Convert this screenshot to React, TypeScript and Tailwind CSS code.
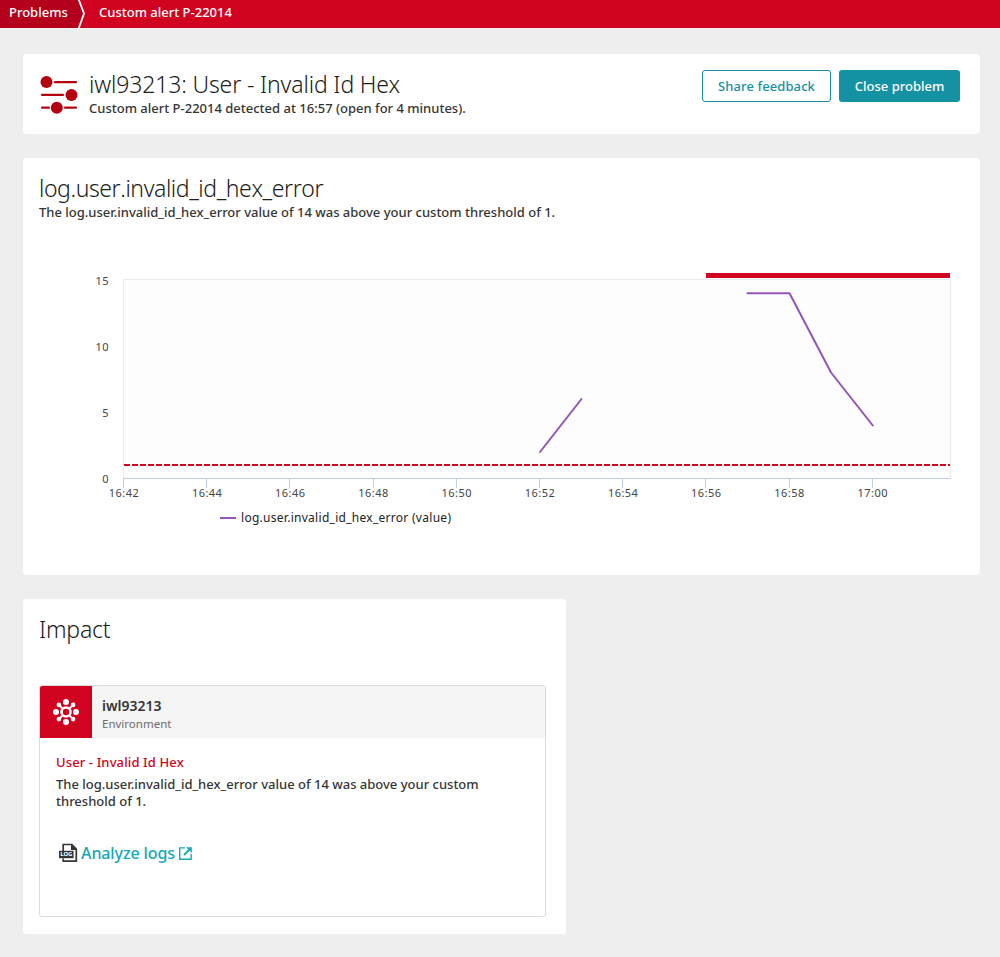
import type { ReactNode } from "react";

const times = ["16:42", "16:44", "16:46", "16:48", "16:50", "16:52", "16:54", "16:56", "16:58", "17:00"];
const levels = [15, 10, 5, 0];

function Card({ className, children }: { className: string; children: ReactNode }) {
  return <section className={`rounded-[3px] bg-white px-4 ${className}`}>{children}</section>;
}

function SlidersIcon() {
  return (
    <svg className="h-[38px] w-[38px] shrink-0" viewBox="0 0 38 38" fill="#b4000f">
      <circle cx="6.5" cy="6" r="6" />
      <rect x="14" y="5" width="23" height="2.2" rx="1" />
      <rect x="1" y="17.8" width="23" height="2.2" rx="1" />
      <circle cx="31.5" cy="19" r="6" />
      <rect x="1" y="30.6" width="9" height="2.2" rx="1" />
      <circle cx="16.8" cy="31.7" r="6" />
      <rect x="24" y="30.6" width="13" height="2.2" rx="1" />
    </svg>
  );
}

function EnvironmentIcon() {
  return (
    <svg className="size-[26px]" viewBox="-13 -13 26 26" fill="#fff">
      <circle r="4.5" fill="none" stroke="#fff" strokeWidth="2.6" />
      {[0, 90, 180, 270].map((a) => (
        <g key={a} transform={`rotate(${a})`}>
          <circle cx="0" cy="-10" r="3" />
          <path d="M3 -3 L7 -7" stroke="#fff" strokeWidth="1.8" />
          <circle cx="7.1" cy="-7.1" r="2.3" />
        </g>
      ))}
    </svg>
  );
}

function LogIcon() {
  return (
    <svg className="h-5 w-[20px]" viewBox="0 0 20 20">
      <path d="M5.2 8V1.5h8.6l4.5 4.5v12.2H5.2V15.5" fill="none" stroke="#353535" strokeWidth="1.7" />
      <path d="M13 1v6h6z" fill="#353535" />
      <rect x="1" y="7.8" width="14.6" height="7.4" fill="#353535" />
      <text x="8.3" y="13.4" fontSize="5.4" fontWeight="700" textAnchor="middle" textLength="12" lengthAdjust="spacingAndGlyphs" fill="#fff">LOG</text>
    </svg>
  );
}

function ExternalIcon() {
  return (
    <svg className="ml-1 size-[13px]" viewBox="0 0 13 13" fill="none" stroke="#14a8b8" strokeWidth="1.4">
      <path d="M6 .9H.7v11.4h11.4V7" />
      <path d="M5 8l5-5" strokeWidth="1.8" />
      <path d="M7 .2h5.8V6z" fill="#14a8b8" stroke="none" />
    </svg>
  );
}

function Chart() {
  return (
    <svg className="-mx-4 mt-[19px] block h-[300px] w-[957px]" viewBox="23 240 957 300">
      <rect x="123.5" y="279.5" width="827" height="199" fill="#fdfdfd" stroke="#ebebeb" />
      <rect x="706" y="273" width="244" height="5" fill="#d0021f" />
      <path d="M124 465H950" stroke="#d0021f" strokeWidth="2" strokeDasharray="6 2" />
      <path d="M123 478.5H950" stroke="#c0cde8" />
      {times.map((t, i) => (
        <g key={t}>
          <path d={`M${Math.round(123 + i * 83.2) + 0.5} 479v9`} stroke="#c0cde8" />
          <text x={123.7 + i * 83.2} y="497" fontSize="11" textAnchor="middle" textLength="30" fill="#444">{t}</text>
        </g>
      ))}
      {levels.map((v, i) => (
        <text key={v} x="109" y={285 + i * 66} fontSize="11" letterSpacing=".4" textAnchor="end" fill="#444">{v}</text>
      ))}
      <g fill="none" stroke="#9355b7" strokeWidth="2" strokeLinejoin="round" strokeLinecap="round">
        <path d="M540 452L581.5 399" />
        <path d="M747.5 293.2H789.5L831 372.5L872.8 425.5" />
      </g>
      <path d="M220 518H236" stroke="#9355b7" strokeWidth="2" />
      <text x="241" y="522" fontSize="12" textLength="210" fill="#222">log.user.invalid_id_hex_error (value)</text>
    </svg>
  );
}

export default function App() {
  return (
    <div className="h-[957px] w-[1000px] overflow-hidden bg-[#eeeeee] font-['Noto_Sans',sans-serif] text-[13px] font-medium text-[#353535]">
      <nav className="flex h-7 bg-[#d0021f] leading-[25px] text-white">
        <span className="w-[77px] bg-[#b4001b] pl-[9px]">Problems</span>
        <svg className="h-7 w-[10px]" viewBox="0 0 10 28">
          <path d="M0 0H2L7 13L1 28H0Z" fill="#b4001b" />
          <path d="M1.5 -1L7 13.5L1.5 29" fill="none" stroke="#fff" strokeWidth="1.8" />
        </svg>
        <span className="ml-3">Custom alert P-22014</span>
      </nav>

      <main className="flex flex-col gap-6 pt-[26px] pl-[23px]">
        <Card className="flex h-20 w-[957px] items-start pr-5">
          <div className="mt-[22px] ml-px"><SlidersIcon /></div>
          <div className="ml-[11px] flex-1 pt-[15px]">
            <h1 className="text-[23px] leading-[30px] font-light tracking-[-0.14px] text-[#202020]">iwl93213: User - Invalid Id Hex</h1>
            <p className="leading-[18px]">Custom alert P-22014 detected at 16:57 (open for 4 minutes).</p>
          </div>
          <div className="flex gap-2 pt-4">
            <button className="h-8 w-[129px] rounded-[3px] border border-[#1491a2] pt-px tracking-[0.1px] text-[#1491a2]">Share feedback</button>
            <button className="h-8 w-[121px] rounded-[3px] bg-[#1491a2] pt-px text-white">Close problem</button>
          </div>
        </Card>

        <Card className="h-[417px] w-[957px] pt-[15px]">
          <h2 className="text-[23px] leading-[30px] font-light tracking-[-0.42px] text-[#202020] [font-kerning:none]">log.user.invalid_id_hex_error</h2>
          <p className="leading-[18px]">The log.user.invalid_id_hex_error value of 14 was above your custom threshold of 1.</p>
          <div className="font-normal"><Chart /></div>
        </Card>

        <Card className="h-[335px] w-[543px] pt-[15px]">
          <h2 className="text-[23px] leading-[30px] font-light tracking-[-0.2px] text-[#202020]">Impact</h2>
          <div className="mt-[41px] h-[232px] w-[507px] overflow-hidden rounded-[3px] border border-[#dcdcdc]">
            <header className="flex h-[52px] bg-[#f5f5f5]">
              <div className="flex w-[52px] items-center justify-center bg-[#d0021f]"><EnvironmentIcon /></div>
              <div className="pt-[10px] pl-[10px]">
                <div className="text-[14px] leading-5 font-semibold">iwl93213</div>
                <div className="text-[11.5px] leading-4 font-normal text-[#6c6c6c]">Environment</div>
              </div>
            </header>
            <div className="pt-4 pl-4">
              <div className="leading-4 tracking-[0.12px] text-[#d0021f]">User - Invalid Id Hex</div>
              <p className="mt-[6px] w-[450px] leading-[17px]">The log.user.invalid_id_hex_error value of 14 was above your custom threshold of 1.</p>
              <a className="mt-[31px] flex h-6 items-center pl-0.5 text-[16px] font-medium tracking-[-0.1px] text-[#14a8b8]">
                <LogIcon />
                <span className="ml-[3px]">Analyze logs</span>
                <ExternalIcon />
              </a>
            </div>
          </div>
        </Card>
      </main>
    </div>
  );
}
